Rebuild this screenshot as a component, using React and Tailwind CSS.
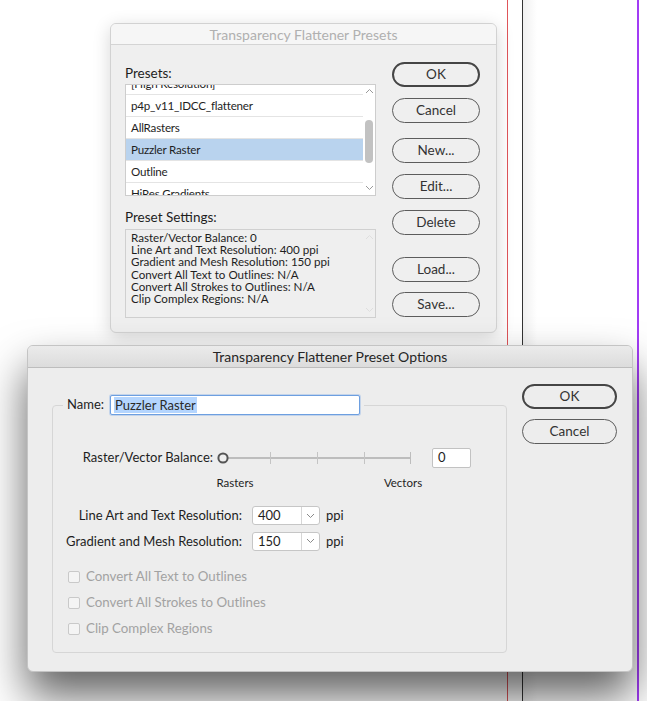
import React from "react";

function Chevron({ up, className = "" }) {
  return (
    <svg width="9" height="6" viewBox="0 0 9 6" className={className}>
      <path
        d={up ? "M1 5 L4.5 1.5 L8 5" : "M1 1 L4.5 4.5 L8 1"}
        fill="none"
        stroke="currentColor"
        strokeWidth="1"
      />
    </svg>
  );
}

function PillButton({ children, primary, className = "" }) {
  return (
    <div
      className={`h-[25px] rounded-full flex items-center justify-center text-[13.5px] text-[#333] ${
        primary ? "border-2 border-[#454545]" : "border border-[#5c5c5c]"
      } ${className}`}
    >
      {children}
    </div>
  );
}

function TopDialog() {
  const rows = [
    "[High Resolution]",
    "p4p_v11_IDCC_flattener",
    "AllRasters",
    "Puzzler Raster",
    "Outline",
    "HiRes Gradients",
  ];
  const settings = [
    "Raster/Vector Balance: 0",
    "Line Art and Text Resolution: 400 ppi",
    "Gradient and Mesh Resolution: 150 ppi",
    "Convert All Text to Outlines: N/A",
    "Convert All Strokes to Outlines: N/A",
    "Clip Complex Regions: N/A",
  ];
  return (
    <div className="absolute left-[110px] top-[23px] w-[387px] h-[310px] rounded-[6px] bg-[#efefef] border border-[#d2d2d2] shadow-[0_4px_18px_rgba(0,0,0,0.16)] flex flex-col overflow-hidden">
      <div className="h-[21px] shrink-0 bg-[#f6f6f6] border-b border-[#d4d4d4] flex items-center justify-center text-[14px] text-[#b0b0b0]">
        Transparency Flattener Presets
      </div>
      <div className="flex pl-[14px]">
        <div className="w-[251px] flex flex-col pt-[20px]">
          <div className="text-[13.5px] leading-[16px] text-[#1e1e1e]">Presets:</div>
          <div className="mt-[3px] h-[112px] border border-[#cdcdcd] bg-white flex overflow-hidden">
            <div className="flex-1 overflow-hidden">
              <div className="-mt-[12px]">
                {rows.map((r) => (
                  <div
                    key={r}
                    className={`h-[22px] border-b border-[#e4e4e4] flex items-center pl-[5px] text-[11.6px] tracking-[-0.2px] text-[#1e1e1e] ${
                      r === "Puzzler Raster" ? "bg-[#b9d3ee]" : ""
                    }`}
                  >
                    {r}
                  </div>
                ))}
              </div>
            </div>
            <div className="w-[12px] flex flex-col items-center text-[#9a9a9a]">
              <Chevron up className="mt-[3px]" />
              <div className="mt-[26px] w-[8px] h-[43px] rounded-full bg-[#c2c2c2]" />
              <div className="flex-1" />
              <Chevron className="mb-[4px]" />
            </div>
          </div>
          <div className="mt-[13px] text-[13.5px] leading-[16px] text-[#1e1e1e]">Preset Settings:</div>
          <div className="mt-[4px] h-[89px] border border-[#d0d0d0] flex pl-[5px] pt-[2px]">
            <div className="flex-1 flex flex-col">
              {settings.map((s) => (
                <div key={s} className="text-[11.6px] leading-[12.2px] text-[#1e1e1e]">
                  {s}
                </div>
              ))}
            </div>
            <div className="w-[12px] flex flex-col items-center text-[#dedede]">
              <Chevron up className="mt-[2px]" />
              <div className="flex-1" />
              <Chevron className="mb-[4px]" />
            </div>
          </div>
        </div>
        <div className="ml-[16px] w-[88px] flex flex-col pt-[17px]">
          <PillButton primary>OK</PillButton>
          <PillButton className="mt-[11px]">Cancel</PillButton>
          <PillButton className="mt-[15px]">New...</PillButton>
          <PillButton className="mt-[11px]">Edit...</PillButton>
          <PillButton className="mt-[11px]">Delete</PillButton>
          <PillButton className="mt-[22px]">Load...</PillButton>
          <PillButton className="mt-[10px]">Save...</PillButton>
        </div>
      </div>
    </div>
  );
}

function Dropdown({ value }) {
  return (
    <div className="ml-[10px] w-[68px] h-[19px] bg-white border border-[#c6c6c6] rounded-[3px] flex items-center">
      <div className="w-[49px] pl-[5px] text-[13px] text-[#1e1e1e] border-r border-[#d6d6d6] h-full flex items-center">
        {value}
      </div>
      <div className="flex-1 flex items-center justify-center text-[#8a8a8a]">
        <Chevron />
      </div>
    </div>
  );
}

function Slider() {
  return (
    <svg width="195" height="14" viewBox="0 0 195 14" className="ml-[4px]">
      <line x1="11" y1="7" x2="193" y2="7" stroke="#bdbdbd" strokeWidth="2" />
      {[53, 100, 147].map((x) => (
        <line key={x} x1={x + 0.5} y1="1" x2={x + 0.5} y2="13" stroke="#c4c4c4" strokeWidth="1" />
      ))}
      <line x1="193.5" y1="1" x2="193.5" y2="13" stroke="#bdbdbd" strokeWidth="1" />
      <circle cx="6" cy="7" r="4.6" fill="#efefef" stroke="#555" strokeWidth="2" />
    </svg>
  );
}

function Check({ label }) {
  return (
    <div className="h-[16px] flex items-center ml-[15px]">
      <div className="w-[12px] h-[12px] border border-[#c9c9c9] rounded-[2px] bg-[#f4f4f4]" />
      <div className="ml-[6px] text-[13.3px] text-[#a2a2a2]">{label}</div>
    </div>
  );
}

function BottomDialog() {
  return (
    <div className="absolute left-[27px] top-[345px] w-[606px] h-[327px] rounded-[6px] bg-[#ededed] border border-[#c4c4c4] shadow-[0_24px_44px_rgba(0,0,0,0.62)] flex flex-col overflow-hidden">
      <div className="h-[22px] shrink-0 bg-[linear-gradient(#ebebeb,#dcdcdc)] border-b border-[#bdbdbd] flex items-center justify-center text-[14px] text-[#262626]">
        Transparency Flattener Preset Options
      </div>
      <div className="flex">
        <div className="pl-[24px] pt-[37px]">
          <div className="w-[455px] h-[248px] border border-[#d6d6d6] rounded-[4px] flex flex-col">
            <div className="-mt-[11px] ml-[10px] w-fit bg-[#ededed] px-[4px] flex items-center">
              <div className="text-[13px] text-[#1e1e1e]">Name:</div>
              <div className="ml-[6px] w-[250px] h-[20px] bg-white border border-[#6d9fe0] rounded-[2px] shadow-[0_0_0_1px_rgba(120,165,230,0.35)] flex items-center pl-[3px]">
                <span className="bg-[#b4d5fe] text-[13px] leading-[16px] text-[#2a2a2a] px-[1px]">Puzzler Raster</span>
              </div>
            </div>
            <div className="mt-[33px] h-[20px] flex items-center">
              <div className="w-[160px] text-right text-[13px] text-[#1e1e1e]">Raster/Vector Balance:</div>
              <Slider />
              <div className="ml-[20px] w-[39px] h-[20px] bg-white border border-[#c2c2c2] rounded-[2px] flex items-center pl-[5px] text-[13px] text-[#1e1e1e]">
                0
              </div>
            </div>
            <div className="mt-[8px] flex text-[11.5px] leading-[14px] text-[#1e1e1e]">
              <div className="ml-[152px] w-[60px] text-center">Rasters</div>
              <div className="ml-[108px] w-[60px] text-center">Vectors</div>
            </div>
            <div className="mt-[16px] flex items-center">
              <div className="w-[189px] text-right text-[13px] text-[#1e1e1e]">Line Art and Text Resolution:</div>
              <Dropdown value="400" />
              <div className="ml-[6px] text-[13px] text-[#1e1e1e]">ppi</div>
            </div>
            <div className="mt-[6px] flex items-center">
              <div className="w-[189px] text-right text-[13px] text-[#1e1e1e]">Gradient and Mesh Resolution:</div>
              <Dropdown value="150" />
              <div className="ml-[6px] text-[13px] text-[#1e1e1e]">ppi</div>
            </div>
            <div className="mt-[18px] flex flex-col gap-[10px]">
              <Check label="Convert All Text to Outlines" />
              <Check label="Convert All Strokes to Outlines" />
              <Check label="Clip Complex Regions" />
            </div>
          </div>
        </div>
        <div className="ml-[15px] w-[95px] pt-[16px] flex flex-col">
          <PillButton primary>OK</PillButton>
          <PillButton className="mt-[10px]">Cancel</PillButton>
        </div>
      </div>
    </div>
  );
}

export default function App() {
  return (
    <div className="relative w-[647px] h-[701px] bg-white overflow-hidden font-['Lato',sans-serif]">
      <div className="absolute left-[507px] top-0 w-[1px] h-full bg-[#e0555a]" />
      <div className="absolute left-[522px] top-0 w-[1px] h-full bg-[#333]" />
      <div className="absolute left-[523px] top-0 w-[14px] h-full bg-[linear-gradient(90deg,rgba(0,0,0,0.06),rgba(0,0,0,0))]" />
      <div className="absolute left-[637px] top-0 w-[2px] h-full bg-[#a23cf5]" />
      <TopDialog />
      <BottomDialog />
    </div>
  );
}
